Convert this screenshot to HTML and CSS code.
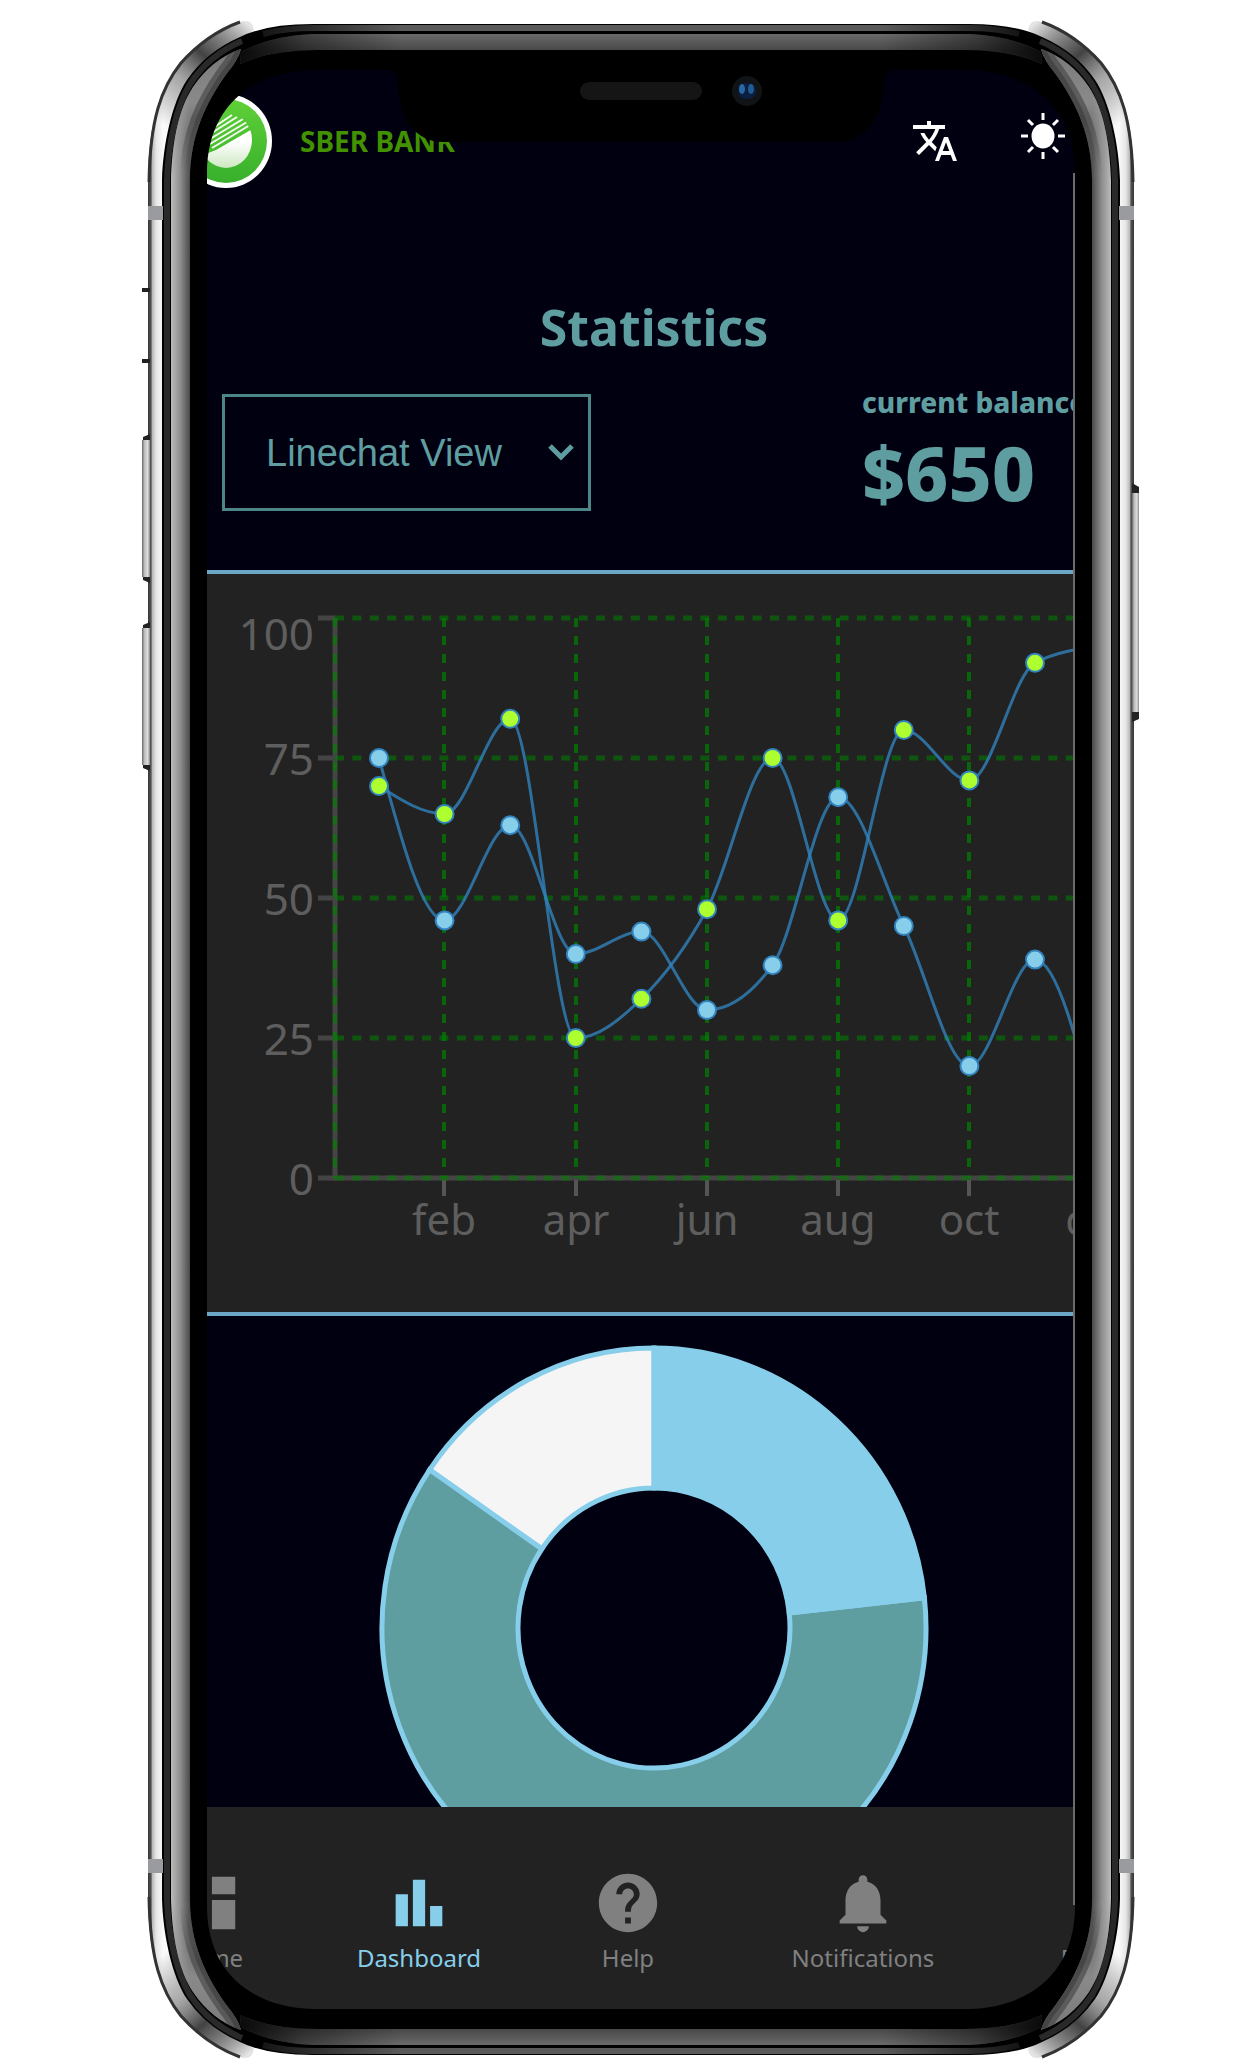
FILE: index.html
```html
<!DOCTYPE html>
<html lang="en">
<head>
<meta charset="utf-8">
<meta name="viewport" content="width=device-width, initial-scale=1">
<title>Sber Bank – Statistics</title>
<link rel="stylesheet" href="styles.css">
</head>
<body>
<div class="phone">
  <div class="screen">
    <header class="topbar">
      <svg class="logo" viewBox="0 0 92 94" aria-hidden="true">
        <defs>
          <linearGradient id="logo-ring" x2="0" y2="1"><stop offset="0" stop-color="#5fd038"/><stop offset="1" stop-color="#38b02c"/></linearGradient>
          <linearGradient id="logo-core" x2="0" y2="1"><stop offset=".3" stop-color="#fff"/><stop offset="1" stop-color="#c3e3b4"/></linearGradient>
          <clipPath id="logo-clip"><ellipse cx="46" cy="46" rx="26" ry="28"/></clipPath>
        </defs>
        <ellipse cx="46" cy="47" rx="46" ry="47" fill="#fff"/>
        <ellipse cx="46" cy="47" rx="41" ry="42" fill="url(#logo-ring)"/>
        <g clip-path="url(#logo-clip)">
          <path d="M10 66L36 56L74 34V80H10Z" fill="url(#logo-core)"/>
          <path d="M30 40L57 23M30 45L63 25M30 50L67 28M32 54L70 31M18 44L52 21" fill="none" stroke="#f2fbee" stroke-width="2"/>
        </g>
      </svg>
      <span class="brand">SBER BANK</span>
      <div class="actions">
        <button class="icon-button" type="button" aria-label="Change language">
          <svg class="icon-translate" viewBox="0 0 24 24"><path d="M12.87 15.07l-2.54-2.51.03-.03c1.74-1.94 2.98-4.17 3.71-6.53H17V4h-7V2H8v2H1v1.99h11.17C11.5 7.92 10.44 9.75 9 11.35 8.07 10.32 7.3 9.19 6.69 8h-2c.73 1.63 1.73 3.17 2.98 4.56l-5.09 5.02L4 19l5-5 3.11 3.11.76-2.04zM18.5 10h-2L12 22h2l1.12-3h4.75L21 22h2l-4.5-12zm-2.62 7l1.62-4.33L19.12 17h-3.24z"/></svg>
        </button>
        <button class="icon-button" type="button" aria-label="Switch theme">
          <svg class="icon-sun" viewBox="0 0 48 60"><ellipse cx="24" cy="25" rx="10" ry="11"/><path d="M24 2v7M24 41v7M2 25h7M39 25h7M9 9l5 5M34 36l5 5M9 41l5-5M34 14l5-5"/></svg>
        </button>
      </div>
    </header>

    <h1 class="title">Statistics</h1>

    <div class="toolbar">
      <div class="view-picker">
        <select class="view-select" aria-label="Chart view">
          <option>Linechat View</option>
          <option>Barchart View</option>
        </select>
        <svg class="chevron" viewBox="0 0 28 20" aria-hidden="true"><path d="M3 4l11 11L25 4"/></svg>
      </div>
      <div class="balance">
        <span class="balance-label">current balance</span>
        <strong class="balance-amount">$650</strong>
      </div>
    </div>

    <section class="line-panel" aria-label="Monthly statistics">
      <svg class="line-chart" viewBox="207 574 960 738">
        <g class="axis">
          <path d="M335 618V1178H1167"/>
          <path d="M318 618H335M318 758H335M318 898H335M318 1038H335M318 1178H335"/>
          <path class="axis-tick" d="M444 1180V1196M576 1180V1196M707 1180V1196M838 1180V1196M969 1180V1196M1100 1180V1196"/>
        </g>
        <g class="grid">
          <path class="grid-h" d="M335 618H1167M335 758H1167M335 898H1167M335 1038H1167M335 1178H1167"/>
          <path class="grid-v" d="M335 618V1178M444 618V1178M576 618V1178M707 618V1178M838 618V1178M969 618V1178M1100 618V1178"/>
        </g>
        <g class="labels labels-y">
          <text x="314" y="650">100</text><text x="314" y="775">75</text><text x="314" y="915">50</text><text x="314" y="1055">25</text><text x="314" y="1195">0</text>
        </g>
        <g class="labels labels-x">
          <text x="444" y="1235">feb</text><text x="576" y="1235">apr</text><text x="707" y="1235">jun</text><text x="838" y="1235">aug</text><text x="969" y="1235">oct</text><text x="1100" y="1235">dec</text>
        </g>
        <g id="series"></g>
      </svg>
    </section>

    <section class="pie-panel" aria-label="Share of spending">
      <svg class="pie-chart" viewBox="207 1316 868 491">
        <path class="slice slice-white" d="M429.6 1469.8A272 280 0 0 1 654 1348V1488A136 140 0 0 0 541.8 1548.9Z"/>
        <path class="slice slice-teal" d="M924.4 1597.8A272 280 0 1 1 429.6 1469.8L541.8 1548.9A136 140 0 1 0 789.2 1612.9Z"/>
        <path class="slice slice-sky" d="M654 1348A272 280 0 0 1 924.4 1597.8L789.2 1612.9A136 140 0 0 0 654 1488Z"/>
      </svg>
    </section>

    <nav class="tabs" aria-label="Main">
      <a class="tab" href="#home">
        <svg class="tab-icon" viewBox="0 0 24 24"><path d="M3 13h8V3H3v10zm0 8h8v-6H3v6zm10 0h8V11h-8v10zm0-18v6h8V3h-8z"/></svg>
        <span>Home</span>
      </a>
      <a class="tab tab-active" href="#dashboard" aria-current="page">
        <svg class="tab-icon" viewBox="0 0 24 24"><path d="M4 9h4.200v11H4zM9.900 4h4.200v16H9.900zM15.800 13H20v7h-4.200z"/></svg>
        <span>Dashboard</span>
      </a>
      <a class="tab" href="#help">
        <svg class="tab-icon" viewBox="0 0 24 24"><path d="M12 2C6.480 2 2 6.480 2 12s4.480 10 10 10 10-4.480 10-10S17.520 2 12 2zm1 17h-2v-2h2v2zm2.070-7.750l-.9.920C13.450 12.900 13 13.500 13 15h-2v-.5c0-1.100.450-2.100 1.170-2.830l1.240-1.260c.370-.360.590-.860.590-1.410 0-1.100-.9-2-2-2s-2 .9-2 2H8c0-2.210 1.790-4 4-4s4 1.790 4 4c0 .880-.360 1.680-.930 2.250z"/></svg>
        <span>Help</span>
      </a>
      <a class="tab" href="#notifications">
        <svg class="tab-icon" viewBox="0 0 24 24"><path d="M12 22c1.100 0 2-.9 2-2h-4c0 1.100.890 2 2 2zm6-6v-5c0-3.070-1.640-5.640-4.500-6.320V4c0-.830-.670-1.500-1.500-1.500s-1.500.670-1.500 1.500v.680C7.630 5.360 6 7.920 6 11v5l-2 2v1h16v-1l-2-2z"/></svg>
        <span>Notifications</span>
      </a>
      <a class="tab" href="#profile">
        <svg class="tab-icon" viewBox="0 0 24 24"></svg>
        <span>Profile</span>
      </a>
    </nav>
  </div>

  <svg class="frame" viewBox="141 0 1000 2070" preserveAspectRatio="none" aria-hidden="true">
    <defs>
      <linearGradient id="steel" gradientUnits="userSpaceOnUse" x1="148" x2="163" y1="0" y2="0">
        <stop offset="0" stop-color="#333"/><stop offset=".2" stop-color="#555"/><stop offset=".3" stop-color="#bbb"/><stop offset=".55" stop-color="#e6e6e6"/><stop offset="1" stop-color="#fafafa"/>
      </linearGradient>
      <linearGradient id="steel-shade" gradientUnits="userSpaceOnUse" x1="158" x2="245" y1="120" y2="22">
        <stop offset="0" stop-color="#222" stop-opacity="0"/><stop offset=".35" stop-color="#555" stop-opacity=".5"/><stop offset=".6" stop-color="#222" stop-opacity=".85"/><stop offset=".75" stop-color="#555" stop-opacity=".8"/><stop offset="1" stop-color="#e4e4e4"/>
      </linearGradient>
      <linearGradient id="bevel" gradientUnits="userSpaceOnUse" x1="171" x2="190" y1="0" y2="0">
        <stop offset="0" stop-color="#bbb"/><stop offset=".5" stop-color="#8c8c8c"/><stop offset="1" stop-color="#4a4a4a"/>
      </linearGradient>
      <linearGradient id="bevel-corner" gradientUnits="userSpaceOnUse" x1="0" x2="0" y1="50" y2="180">
        <stop offset="0" stop-color="#777"/><stop offset=".4" stop-color="#999" stop-opacity=".8"/><stop offset="1" stop-color="#999" stop-opacity="0"/>
      </linearGradient>
      <linearGradient id="bevel-inner" gradientUnits="userSpaceOnUse" x1="0" x2="0" y1="60" y2="175">
        <stop offset="0" stop-color="#333" stop-opacity=".5"/><stop offset=".5" stop-color="#333" stop-opacity=".5"/><stop offset="1" stop-color="#333" stop-opacity="0"/>
      </linearGradient>
      <clipPath id="bevel-clip"><path d="M171 180C172 145 178 110 193 87Q212 59 241 49Q238 60 227 73C206 102 190 135 190 180Z"/></clipPath>
      <linearGradient id="top-bevel" gradientUnits="userSpaceOnUse" x1="0" x2="0" y1="33" y2="51">
        <stop offset="0" stop-color="#6c6c6c"/><stop offset="1" stop-color="#464646"/>
      </linearGradient>
      <linearGradient id="top-edge" gradientUnits="userSpaceOnUse" x1="255" x2="400" y1="0" y2="0">
        <stop offset="0" stop-color="#111"/><stop offset="1" stop-color="#5a5a5a"/>
      </linearGradient>
      <linearGradient id="top-fade" gradientUnits="userSpaceOnUse" x1="240" x2="400" y1="0" y2="0">
        <stop offset="0" stop-color="#000" stop-opacity=".85"/><stop offset=".4" stop-color="#000" stop-opacity=".4"/><stop offset="1" stop-color="#000" stop-opacity="0"/>
      </linearGradient>
      <linearGradient id="button-steel" x2="1" y2="0">
        <stop offset="0" stop-color="#666"/><stop offset=".3" stop-color="#bbb"/><stop offset=".7" stop-color="#ddd"/><stop offset="1" stop-color="#888"/>
      </linearGradient>
      <g id="corner">
        <path d="M148 1040V180C149 120 160 88 180 63Q206 34 240 22Q252 18 254 30L240 40L163 190V1040Z" fill="url(#steel)"/>
        <path d="M148 180C149 120 160 88 180 63Q206 34 240 22Q252 18 254 30L240 40L163 190Z" fill="url(#steel-shade)"/>
        <path d="M149 182C150 120 161 88 181 63Q207 34 240 22" fill="none" stroke="#333" stroke-width="3"/>
        <path d="M162 1040V180C163 145 172 102 187 80Q206 52 240 37Q266 24 313 24H641V70H313C250 72 207 108 207 173V1040Z" fill="#000"/>
        <path d="M167 1040V180C168 145 176 107 190 84Q209 55 242 41" fill="none" stroke="#292929" stroke-width="6"/>
        <path d="M641 28H313Q285 28 263 34" fill="none" stroke="url(#top-edge)" stroke-width="6"/>
        <path d="M641 34H313Q270 36 241 52L240 64Q270 50 317 50H641Z" fill="url(#top-bevel)"/>
        <path d="M440 34H313Q270 36 241 52L240 64Q270 50 317 50H440Z" fill="url(#top-fade)"/>
        <path d="M171 1040V180C172 145 178 110 193 87Q212 59 241 49Q238 60 227 73C206 102 190 135 190 180V1040Z" fill="url(#bevel)"/>
        <path d="M171 180C172 145 178 110 193 87Q212 59 241 49Q238 60 227 73C206 102 190 135 190 180Z" fill="url(#bevel-corner)"/>
        <g clip-path="url(#bevel-clip)" fill="none" stroke="url(#bevel-inner)">
          <path d="M241 49Q238 60 227 73C206 102 190 135 190 180" stroke-width="20"/>
          <path d="M241 49Q238 60 227 73C206 102 190 135 190 180" stroke-width="10"/>
        </g>
        <path d="M148 206h15v14h-15z" fill="#999b9e"/>
      </g>
    </defs>
    <use href="#corner"/>
    <use href="#corner" transform="translate(1282 0) scale(-1 1)"/>
    <use href="#corner" transform="translate(0 2079) scale(1 -1)"/>
    <use href="#corner" transform="translate(1282 2079) scale(-1 -1)"/>
    <path d="M1073 173h2V1905h-2z" fill="#6b6b6b"/>
    <path d="M387 70Q398 70 398 85C398 118 416 142 443 142H837C864 142 883 118 884 85Q885 70 895 70V60H387Z" fill="#000"/>
    <rect x="580" y="82" width="122" height="18" rx="9" fill="#151515"/>
    <ellipse cx="747" cy="91" rx="15" ry="15" fill="#111417"/>
    <ellipse cx="747" cy="91" rx="9" ry="8" fill="#0b1f42"/>
    <ellipse cx="742" cy="89" rx="3" ry="5" fill="#2868a4"/>
    <ellipse cx="751" cy="89" rx="3" ry="5" fill="#225a94"/>
    <path d="M142 290h8M142 361h8" stroke="#222" stroke-width="4"/>
    <path d="M143 437l7-3V583l-7-3zM143 625l7-3V771l-7-3zM1139 487l-7-4V722l7-3z" fill="#222"/>
    <path d="M142 440h8V577h-8z" fill="url(#button-steel)"/>
    <path d="M142 628h8V765h-8z" fill="url(#button-steel)"/>
    <path d="M1132 493h7V712h-7z" fill="url(#button-steel)"/>
  </svg>
</div>
<script src="chart.js"></script>
</body>
</html>
```
FILE: styles.css
```css
* { box-sizing: border-box; }

body {
  margin: 0;
  padding-left: 32px;
  background: #fff;
  font-family: "Noto Sans", "Open Sans", sans-serif;
}

.phone {
  position: relative;
  max-width: 1000px;
  margin: 0 auto;
  padding: 70px 66px 60px;
}

.frame {
  position: absolute;
  inset: 0;
  width: 100%;
  height: 100%;
  pointer-events: none;
}

.screen {
  overflow: hidden;
  border-radius: 60px;
  background: #000010;
  color: #5f9ea0;
}

.topbar {
  display: flex;
  align-items: center;
  padding: 24px 8px 0 0;
}

.logo {
  flex: none;
  width: 92px;
  height: 94px;
  margin-left: -27px;
}

.brand {
  margin-left: 28px;
  color: #419100;
  font-size: 28px;
  font-weight: 700;
  line-height: 32px;
  white-space: nowrap;
}

.actions {
  display: flex;
  align-items: center;
  gap: 60px;
  margin-left: auto;
}

.icon-button {
  padding: 0;
  border: 0;
  background: none;
}

.icon-button svg { display: block; fill: #fff; }
.icon-translate { width: 48px; height: 48px; }
.icon-sun { width: 48px; height: 60px; stroke: #fff; stroke-width: 3px; }

.title {
  margin: 109px 0 0;
  padding-left: 26px;
  font-size: 50px;
  font-weight: 700;
  line-height: 60px;
  text-align: center;
}

.toolbar {
  display: flex;
  justify-content: space-between;
  align-items: flex-start;
  padding: 31px 0 58px 15px;
}

.view-picker {
  position: relative;
  margin-top: 6px;
}

.view-select {
  display: block;
  width: 369px;
  height: 117px;
  padding: 0 0 0 41px;
  border: 3px solid #4d8688;
  border-radius: 0;
  appearance: none;
  background: transparent;
  color: #5f9ea0;
  font: 38px "Liberation Sans", sans-serif;
}

.chevron {
  position: absolute;
  top: 48px;
  right: 16px;
  width: 28px;
  height: 20px;
  fill: none;
  stroke: #5f9ea0;
  stroke-width: 5px;
  pointer-events: none;
}

.balance {
  display: flex;
  flex-direction: column;
  gap: 16px;
  width: 213px;
  white-space: nowrap;
}

.balance-label { font-size: 28px; font-weight: 800; line-height: 28px; }
.balance-amount { font-size: 75px; font-weight: 800; line-height: 80px; }

.line-panel {
  overflow: hidden;
  border: solid #6ba7c4;
  border-width: 4px 0;
  background: #222;
}

.line-chart {
  display: block;
  width: 960px;
  height: 738px;
}

.axis { fill: none; stroke: #444; stroke-width: 5px; }
.axis-tick { stroke: #555; stroke-width: 4px; }
.grid { fill: none; stroke: #008000; }
.grid-h { stroke-width: 5px; stroke-dasharray: 9 8.4; opacity: .55; }
.grid-v { stroke-width: 4px; stroke-dasharray: 9 9; opacity: .7; }
.labels { fill: #5e5e5e; font-size: 42px; }
.labels-y { font-size: 44px; text-anchor: end; }
.labels-x { text-anchor: middle; }

.series-line { fill: none; stroke: #3182bd; stroke-width: 3px; opacity: .8; }
.series-dot { stroke: #3182bd; stroke-width: 2px; }
.dot-income { fill: #adff2f; }
.dot-expense { fill: #87ceeb; }

.pie-panel { overflow: hidden; }

.pie-chart {
  display: block;
  width: 100%;
  height: 491px;
}

.slice { stroke: #87ceeb; stroke-width: 5px; }
.slice-sky { fill: #87ceeb; }
.slice-teal { fill: #5f9ea0; }
.slice-white { fill: #f5f5f5; }

.tabs {
  display: grid;
  grid-template-columns: 212px 208px 210px 260px 208px;
  margin-left: -104px;
  padding: 61px 0 36px;
  background: #222;
}

.tab {
  display: flex;
  flex-direction: column;
  align-items: center;
  gap: 4px;
  color: #808080;
  font-size: 24px;
  line-height: 32px;
  text-decoration: none;
}

.tab-active { color: #87ceeb; }

.tab-icon {
  width: 70px;
  height: 70px;
  fill: currentColor;
}
```
FILE: chart.js
```javascript
// Draws both series as monotone cubic curves with a dot on every month.
const income = [70, 65, 82, 25, 32, 48, 75, 46, 80, 71, 92, 95];
const expense = [75, 46, 63, 40, 44, 30, 38, 68, 45, 20, 39, 8];
const x = i => 379 + i * 65.6;
const y = v => 1178 - v * 5.6;

function curve(values) {
  const d = values.slice(1).map((v, i) => v - values[i]);
  const n = values.length;
  const m = values.map((_, i) => {
    if (i === 0 || i === n - 1) return 0;
    const a = d[i - 1], b = d[i];
    if (a * b <= 0) return 0;
    return Math.sign(a) * Math.min(2 * Math.abs(a), 2 * Math.abs(b), Math.abs(a + b) / 2);
  });
  m[0] = (3 * d[0] - m[1]) / 2;
  m[n - 1] = (3 * d[n - 2] - m[n - 2]) / 2;
  let path = `M${x(0)} ${y(values[0])}`;
  for (let i = 1; i < n; i++) {
    path += `C${x(i - 1 + 1 / 3)} ${y(values[i - 1] + m[i - 1] / 3)} ` +
      `${x(i - 1 / 3)} ${y(values[i] - m[i] / 3)} ${x(i)} ${y(values[i])}`;
  }
  return path;
}

const dots = (values, name) => values.map((v, i) =>
  `<circle class="series-dot ${name}" cx="${x(i)}" cy="${y(v)}" r="9"/>`).join('');

document.getElementById('series').innerHTML =
  `<path class="series-line" d="${curve(expense)}"/><path class="series-line" d="${curve(income)}"/>` +
  dots(expense, 'dot-expense') + dots(income, 'dot-income');
```
